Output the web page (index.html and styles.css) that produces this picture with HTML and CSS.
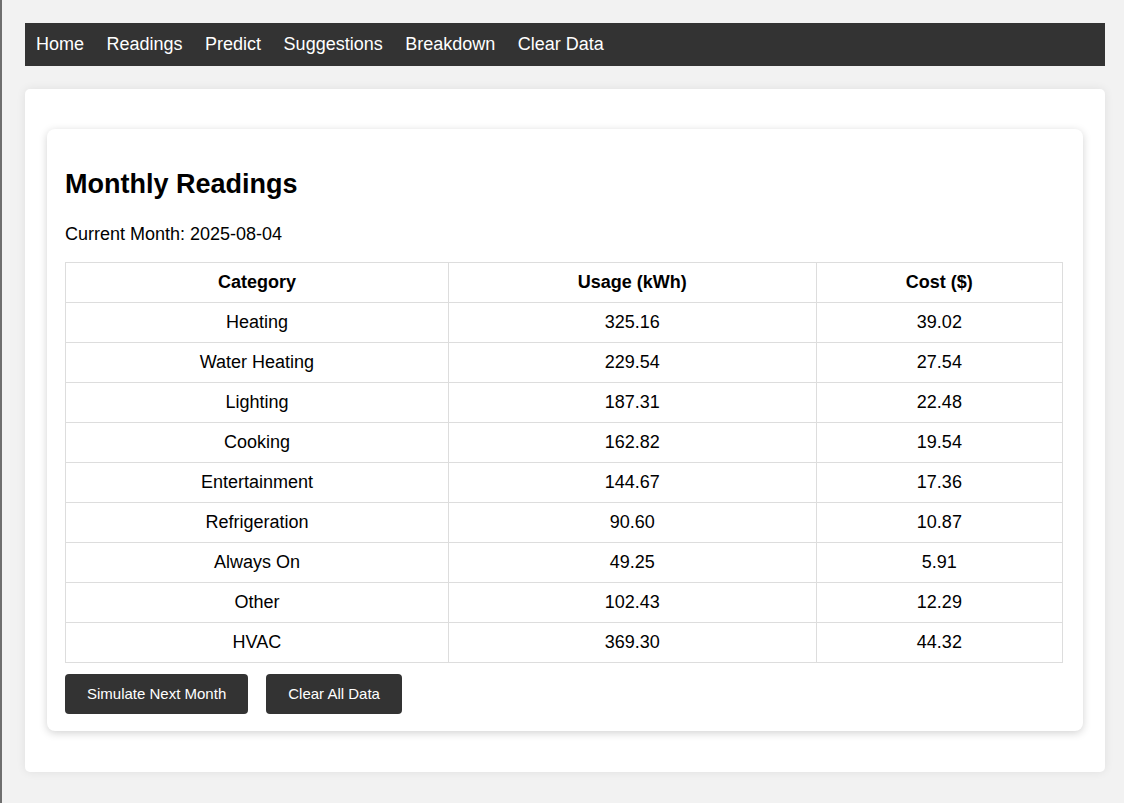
FILE: index.html
```html
<!DOCTYPE html>
<html lang="en">
<head>
<meta charset="utf-8">
<title>Monthly Readings</title>
<link rel="stylesheet" href="styles.css">
</head>
<body>
<nav class="navbar">
  <a href="#" class="nav-link">Home</a>
  <a href="#" class="nav-link">Readings</a>
  <a href="#" class="nav-link">Predict</a>
  <a href="#" class="nav-link">Suggestions</a>
  <a href="#" class="nav-link">Breakdown</a>
  <a href="#" class="nav-link">Clear Data</a>
</nav>
<main class="container">
  <section class="card">
    <h2 class="title">Monthly Readings</h2>
    <p class="current">Current Month: 2025-08-04</p>
    <table class="readings">
      <colgroup>
        <col class="col-cat">
        <col class="col-use">
        <col class="col-cost">
      </colgroup>
      <thead>
        <tr><th>Category</th><th>Usage (kWh)</th><th>Cost ($)</th></tr>
      </thead>
      <tbody>
        <tr><td>Heating</td><td>325.16</td><td>39.02</td></tr>
        <tr><td>Water Heating</td><td>229.54</td><td>27.54</td></tr>
        <tr><td>Lighting</td><td>187.31</td><td>22.48</td></tr>
        <tr><td>Cooking</td><td>162.82</td><td>19.54</td></tr>
        <tr><td>Entertainment</td><td>144.67</td><td>17.36</td></tr>
        <tr><td>Refrigeration</td><td>90.60</td><td>10.87</td></tr>
        <tr><td>Always On</td><td>49.25</td><td>5.91</td></tr>
        <tr><td>Other</td><td>102.43</td><td>12.29</td></tr>
        <tr><td>HVAC</td><td>369.30</td><td>44.32</td></tr>
      </tbody>
    </table>
    <div class="actions">
      <button class="btn">Simulate Next Month</button>
      <button class="btn">Clear All Data</button>
    </div>
  </section>
</main>
</body>
</html>
```
FILE: styles.css
```css
html {
  background: #f2f2f2;
  box-shadow: inset 2px 0 0 #6f6f6f;
  min-height: 100%;
}
body {
  margin: 0;
  padding: 23px 19px 20px 25px;
  font-family: "Liberation Sans", Arial, sans-serif;
  font-size: 18px;
  color: #000;
}
.navbar {
  display: flex;
  gap: 22.5px;
  background: #333;
  padding: 11px 11px;
  line-height: 21px;
}
.nav-link {
  color: #fff;
  text-decoration: none;
  font-size: 18px;
}
.container {
  margin-top: 23px;
  background: #fff;
  border-radius: 5px;
  box-shadow: 0 0 10px rgba(0, 0, 0, 0.08);
  padding: 40px 22px 41px;
}
.card {
  background: #fff;
  border-radius: 8px;
  box-shadow: 0 2px 8px rgba(0, 0, 0, 0.18);
  padding: 18px 20px 17px 18px;
}
.title {
  font-size: 27px;
  font-weight: bold;
  margin: 22px 0 24px;
}
.current {
  margin: 0 0 17px;
}
.readings {
  width: 100%;
  border-collapse: collapse;
  table-layout: fixed;
}
.col-cat { width: 38.4%; }
.col-use { width: 36.9%; }
.col-cost { width: 24.7%; }
.readings th,
.readings td {
  border: 1px solid #ddd;
  padding: 9px 8px;
  line-height: 21px;
  text-align: center;
  font-size: 18px;
}
.readings th {
  font-weight: bold;
}
.actions {
  display: flex;
  gap: 18px;
  margin-top: 11px;
}
.btn {
  background: #333;
  color: #fff;
  border: none;
  border-radius: 4px;
  font-family: "Liberation Sans", Arial, sans-serif;
  font-size: 15px;
  line-height: 18px;
  padding: 11px 22px;
  cursor: pointer;
}
```
